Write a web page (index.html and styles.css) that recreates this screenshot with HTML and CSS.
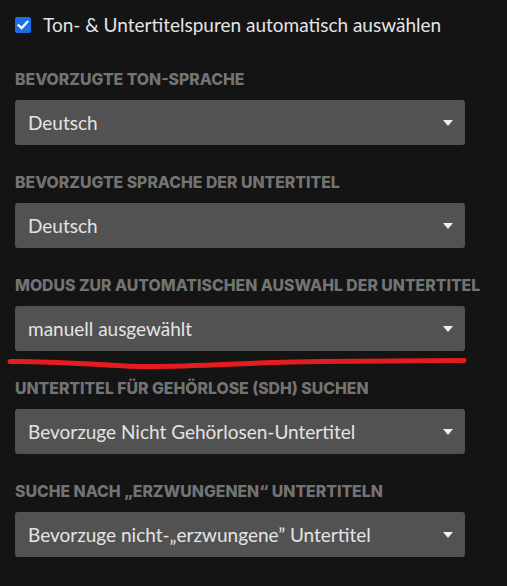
FILE: index.html
```html
<!DOCTYPE html>
<html lang="de">
<head>
<meta charset="utf-8">
<title>Einstellungen</title>
<link rel="stylesheet" href="styles.css">
</head>
<body>
<div class="page">
  <label class="check-row">
    <span class="checkbox">
      <svg viewBox="0 0 16 16" width="16" height="16"><path d="M3.6 8.2 L6.6 11.1 L12.4 4.9" fill="none" stroke="#fff" stroke-width="2.2" stroke-linecap="square"/></svg>
    </span>
    <span class="check-text">Ton- &amp; Untertitelspuren automatisch auswählen</span>
  </label>

  <div class="section">
    <div class="label">Bevorzugte Ton-Sprache</div>
    <div class="select"><span>Deutsch</span><i class="arrow"></i></div>
  </div>

  <div class="section">
    <div class="label">Bevorzugte Sprache der Untertitel</div>
    <div class="select"><span>Deutsch</span><i class="arrow"></i></div>
  </div>

  <div class="section">
    <div class="label">Modus zur automatischen Auswahl der Untertitel</div>
    <div class="select"><span>manuell ausgewählt</span><i class="arrow"></i></div>
  </div>

  <div class="section">
    <div class="label">Untertitel für Gehörlose (SDH) suchen</div>
    <div class="select"><span>Bevorzuge Nicht Gehörlosen-Untertitel</span><i class="arrow"></i></div>
  </div>

  <div class="section">
    <div class="label">Suche nach „erzwungenen“ Untertiteln</div>
    <div class="select"><span>Bevorzuge nicht-„erzwungene” Untertitel</span><i class="arrow"></i></div>
  </div>

  <svg class="scribble" viewBox="0 0 480 25" width="480" height="25">
    <path d="M10 11.6 C 40 10.6, 75 13.5, 125 16 S 250 12, 320 11.6 S 430 10.6, 464 10.6" fill="none" stroke="#e31c1f" stroke-width="5" stroke-linecap="round"/>
  </svg>
</div>
</body>
</html>
```

FILE: styles.css
```css
html, body {
  margin: 0;
  padding: 0;
  background: #141414;
}

.page {
  position: relative;
  width: 507px;
  height: 586px;
  padding: 8px 0 0 15px;
  box-sizing: border-box;
  font-family: "Lato", "Open Sans", sans-serif;
  color: #e4e4e4;
}

.check-row {
  display: flex;
  align-items: center;
  height: 34px;
  gap: 12px;
}

.checkbox {
  width: 16px;
  height: 16px;
  border-radius: 2px;
  background: #1a6fe8;
  display: flex;
}

.check-text {
  font-size: 19px;
  line-height: 34px;
}

.section {
  margin-top: 28px;
}

.label {
  font-family: "Inter", sans-serif;
  font-weight: 800;
  font-size: 15.8px;
  line-height: 20px;
  text-transform: uppercase;
  color: #737373;
}

.select {
  margin-top: 10px;
  width: 450px;
  height: 45px;
  box-sizing: border-box;
  background: #525252;
  border-radius: 3px;
  padding: 0 12px 0 13px;
  display: flex;
  align-items: center;
  justify-content: space-between;
  font-size: 19px;
}

.arrow {
  width: 0;
  height: 0;
  border-left: 5px solid transparent;
  border-right: 5px solid transparent;
  border-top: 6px solid #eeeeee;
}

.scribble {
  position: absolute;
  left: 0;
  top: 350px;
}
```
